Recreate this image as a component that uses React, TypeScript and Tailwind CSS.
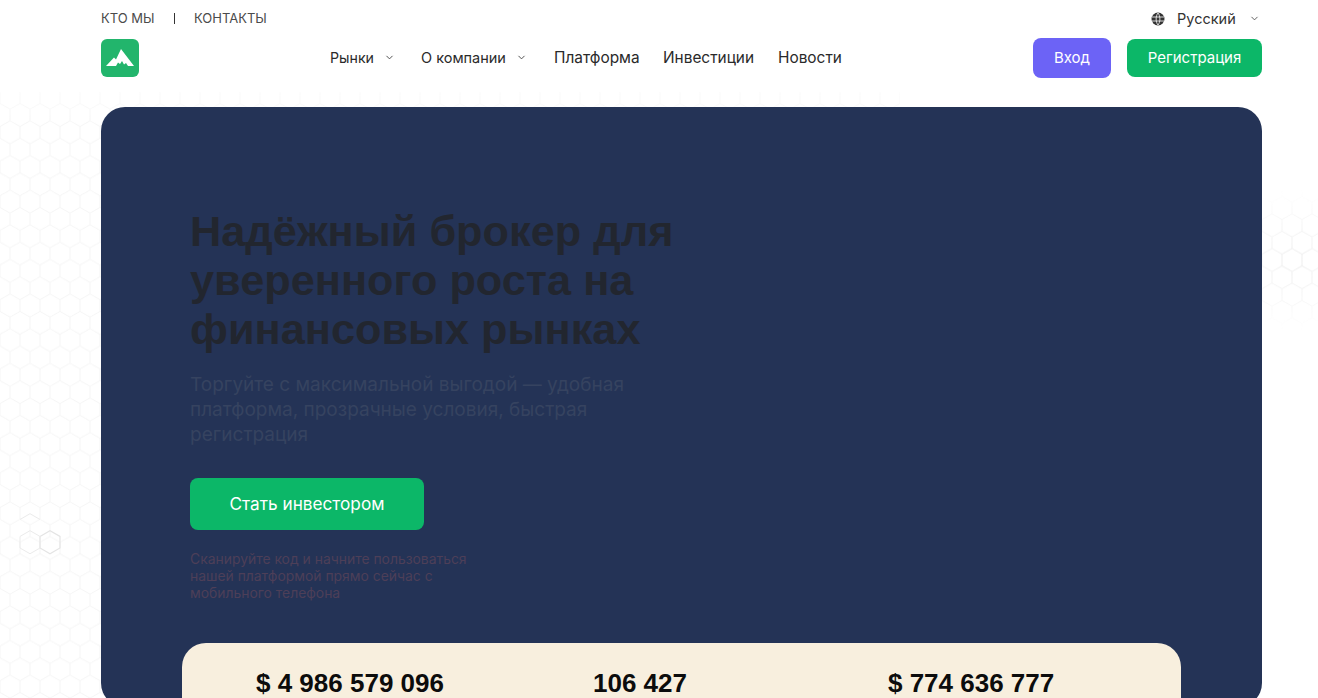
import { ChevronDown } from "lucide-react";

const sans = "font-['Inter',sans-serif]";

const CELL = "M10 0V5.77L20 11.55V23.09L10 28.87V34.64M10 28.87L0 23.09V11.55L10 5.77";

function HexBackground() {
  return (
    <svg className="absolute inset-0 h-full w-full" width="1318" height="698" aria-hidden="true">
      <defs>
        <pattern id="hexLeft" width="20" height="34.64" patternUnits="userSpaceOnUse" patternTransform="translate(0 530.68)">
          <path d={CELL} fill="none" stroke="#f2f2f2" strokeWidth="1" />
        </pattern>
        <pattern id="hexRight" width="20" height="34.64" patternUnits="userSpaceOnUse" patternTransform="translate(2 242.68)">
          <path d={CELL} fill="none" stroke="#ececec" strokeWidth="1" />
        </pattern>
        <radialGradient id="fadeRight" cx="1295" cy="260" r="70" gradientUnits="userSpaceOnUse">
          <stop offset="0" stopColor="#fff" />
          <stop offset="1" stopColor="#000" />
        </radialGradient>
        <linearGradient id="fadeTop" x1="0" y1="92" x2="0" y2="125" gradientUnits="userSpaceOnUse">
          <stop offset="0" stopColor="#555" />
          <stop offset="1" stopColor="#bbb" />
        </linearGradient>
        <mask id="maskRight">
          <rect width="1318" height="698" fill="url(#fadeRight)" />
        </mask>
        <mask id="maskLeft">
          <rect width="1318" height="698" fill="url(#fadeTop)" />
        </mask>
      </defs>
      <rect x="0" y="92" width="900" height="606" fill="url(#hexLeft)" mask="url(#maskLeft)" />
      <rect x="1262" y="190" width="56" height="140" fill="url(#hexRight)" mask="url(#maskRight)" />
      {/* the few cells that show stronger */}
      <path d="M40 536.45L50 530.68L60 536.45V547.99L50 553.77L40 547.99Z" fill="none" stroke="#e4e4e4" strokeWidth="1.2" />
      <path d="M20 536.45L30 530.68L40 536.45V547.99L30 553.77L20 547.99Z" fill="none" stroke="#ebebeb" />
      <path d="M20 519.5L30 513.7L40 519.5" fill="none" stroke="#ebebeb" />
    </svg>
  );
}

function Logo() {
  return (
    <div className="h-[38px] w-[38px] rounded-md bg-[#22b56c]">
      <svg width="38" height="38" viewBox="0 0 38 38" aria-hidden="true">
        <path d="M5 27L13 18.5L15 20.5L20 10L33 27Z" fill="#fff" />
        <path d="M15 27L17 23.5L19 25L21 22L23 25.5L25 24L27 27Z" fill="#22b56c" />
      </svg>
    </div>
  );
}

function NavLink({ label, menu, className }: { label: string; menu?: boolean; className: string }) {
  return (
    <a className={`flex items-center text-[#2a2a2a] ${className}`}>
      {label}
      {menu && <ChevronDown size={11} strokeWidth={2} className="ml-[10px] text-[#444]" />}
    </a>
  );
}

function Header() {
  return (
    <header className={`relative pl-[101px] pr-[56px] ${sans}`}>
      <div className="flex h-[37px] items-center justify-between pr-[2px]">
        <div className="flex items-center whitespace-nowrap text-[13px] text-[#4b4b4b]">
          <span className="w-[53px]">КТО МЫ</span>
          <span className="ml-[20px] h-[11px] w-px bg-[#333]" />
          <span className="ml-[19px]">КОНТАКТЫ</span>
        </div>
        <div className="flex items-center text-[14.5px] text-[#333]">
          <svg width="14" height="14" viewBox="0 0 14 14" fill="none" aria-hidden="true">
            <circle cx="7" cy="7" r="6.5" fill="#333" />
            <path d="M1 5H13M1 9H13M7 1C4.5 4 4.5 10 7 13C9.5 10 9.5 4 7 1Z" stroke="#fff" strokeWidth="0.8" />
          </svg>
          <span className="ml-[12px] w-[60px]">Русский</span>
          <ChevronDown size={11} strokeWidth={2} className="ml-[12px] text-[#555]" />
        </div>
      </div>
      <div className="flex h-[42px] items-center">
        <Logo />
        <nav className="ml-[191px] flex items-center whitespace-nowrap">
          <NavLink label="Рынки" menu className="w-[91px] text-[14.2px]" />
          <NavLink label="О компании" menu className="w-[133px] text-[14.5px]" />
          <NavLink label="Платформа" className="w-[109px] text-[15.4px]" />
          <NavLink label="Инвестиции" className="w-[115px] text-[15.4px]" />
          <NavLink label="Новости" className="w-[70px] text-[15.4px]" />
        </nav>
        <div className="ml-auto flex items-center gap-[16px] text-[15px] text-white">
          <button className="flex h-[40px] w-[78px] items-center justify-center rounded-lg bg-[#6c63f6]">Вход</button>
          <button className="flex h-[38px] w-[135px] items-center justify-center rounded-lg bg-[#0cb768]">Регистрация</button>
        </div>
      </div>
    </header>
  );
}

function Hero() {
  return (
    <section className="relative ml-[101px] mt-[28px] h-[600px] w-[1161px] rounded-3xl bg-[#243356] pl-[89px] pt-[100px]">
      <h1 className="w-[520px] font-['Liberation_Sans',sans-serif] text-[43.3px] font-bold leading-[49px] text-[#22262f]">
        Надёжный брокер для уверенного роста на финансовых рынках
      </h1>
      <p className={`mt-[18px] w-[460px] text-[19px] leading-[25px] text-[#364360] ${sans}`}>
        Торгуйте с максимальной выгодой — удобная платформа, прозрачные условия, быстрая регистрация
      </p>
      <button className={`mt-[31px] flex h-[52px] w-[234px] items-center justify-center rounded-lg bg-[#0cb768] text-[17.2px] text-white ${sans}`}>
        Стать инвестором
      </button>
      <p className={`mt-[21px] w-[290px] text-[13.9px] leading-[17px] text-[#4d3f58] ${sans}`}>
        Сканируйте код и начните пользоваться нашей платформой прямо сейчас с мобильного телефона
      </p>
      <div className="absolute bottom-0 left-[81px] flex h-[64px] w-[999px] items-start rounded-t-3xl bg-[#f8efde] pl-[74px] pt-[24px] font-['Liberation_Sans',sans-serif] text-[26px] font-bold leading-[32px] text-[#0c0c0c]">
        <span>$ 4 986 579 096</span>
        <span className="ml-[149px]">106 427</span>
        <span className="ml-[201px]">$ 774 636 777</span>
      </div>
    </section>
  );
}

export default function App() {
  return (
    <div className="relative h-[698px] w-[1318px] overflow-hidden bg-white">
      <HexBackground />
      <Header />
      <Hero />
    </div>
  );
}
